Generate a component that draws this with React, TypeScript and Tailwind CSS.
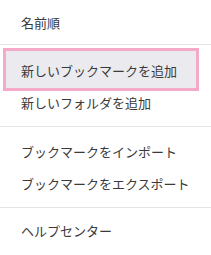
import React from "react";

const font = { fontFamily: '"Noto Sans CJK JP", "Noto Sans", sans-serif' };

function Item({ label, active = false }: { label: string; active?: boolean }) {
  return (
    <div className="relative h-8 flex items-center">
      {active && (
        <div className="absolute left-[3px] right-[12px] top-[-6px] bottom-[-5px] border-[3px] border-[#f3a9c7] bg-[#ebebef]" />
      )}
      <span className="relative pl-[21px] text-[13px] leading-none text-[#3a3a3a]">{label}</span>
    </div>
  );
}

function Divider() {
  return <div className="h-px bg-[#e4e4e4]" />;
}

export default function App() {
  return (
    <div className="w-[211px] h-[255px] bg-white overflow-hidden" style={font}>
      <div className="pt-[6px] pb-[6px]">
        <Item label="名前順" />
      </div>
      <Divider />
      <div className="pt-[9px] pb-[8px]">
        <Item label="新しいブックマークを追加" active />
        <Item label="新しいフォルダを追加" />
      </div>
      <Divider />
      <div className="py-[8px]">
        <Item label="ブックマークをインポート" />
        <Item label="ブックマークをエクスポート" />
      </div>
      <Divider />
      <div className="py-[6px]">
        <Item label="ヘルプセンター" />
      </div>
    </div>
  );
}
